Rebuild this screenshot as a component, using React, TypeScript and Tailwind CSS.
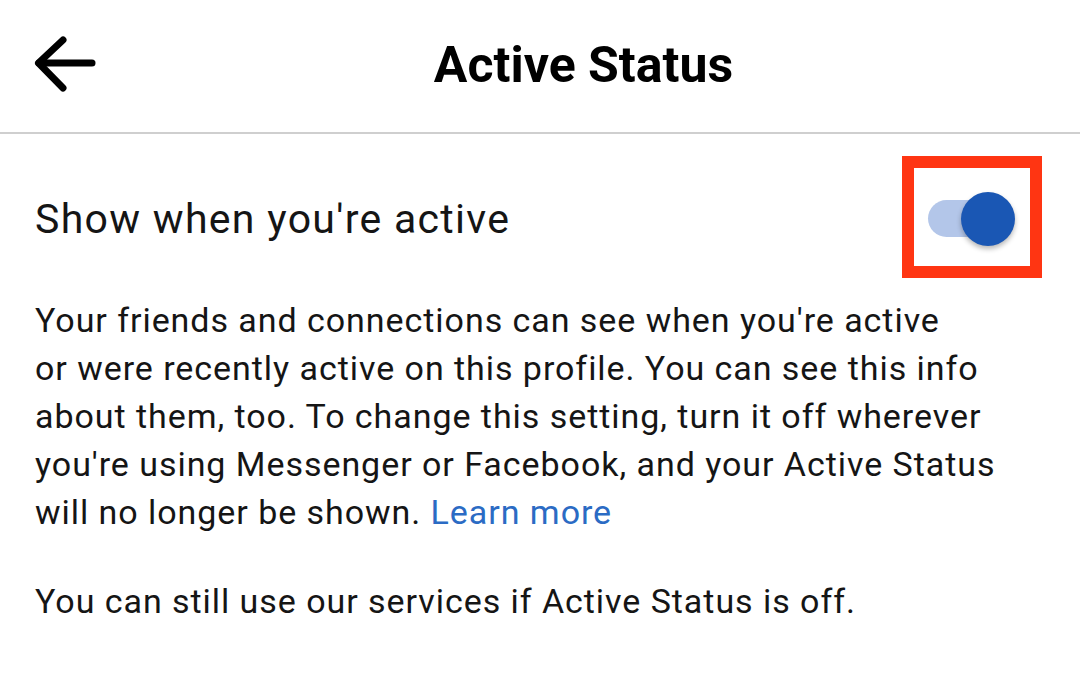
export default function App() {
  return (
    <div className="h-[689px] w-[1080px] overflow-hidden bg-white font-['Roboto',sans-serif] text-[#151515]">
      <header className="relative flex h-[134px] items-start justify-center border-b-2 border-[#cfcfcf] pl-[87px] pt-[40px]">
        <button className="absolute left-[32px] top-[34px] text-black">
          <svg width="66" height="60" viewBox="0 0 66 60" fill="none" stroke="currentColor" strokeWidth="7" strokeLinecap="round" strokeLinejoin="round">
            <path d="M60 29H7" />
            <path d="M31 6 6.5 29 31 54" />
          </svg>
        </button>
        <h1 className="text-[50px] font-bold leading-none text-black">Active Status</h1>
      </header>

      <section className="flex items-center justify-between pl-[35px] pr-[38px] pt-[22px]">
        <span className="pt-[5px] text-[41px] leading-none tracking-[1.3px]">Show when you're active</span>
        <div className="flex h-[122px] w-[140px] items-center border-[12px] border-[#ff3512] pl-[14px] pt-[3px]">
          <div className="relative h-[37px] w-[72px]">
            <div className="h-full w-full rounded-full bg-[#b3c6e9]" />
            <div className="absolute right-[-15px] top-[-8px] h-[54px] w-[54px] rounded-full bg-[#1a57b4] shadow-[0_3px_5px_rgba(0,0,0,0.28)]" />
          </div>
        </div>
      </section>

      <p className="mt-[18px] pl-[35px] text-[34px] leading-[48px] tracking-[0.95px]">
        Your friends and connections can see when you're active
        <br />
        or were recently active on this profile. You can see this info
        <br />
        about them, too. To change this setting, turn it off wherever
        <br />
        you're using Messenger or Facebook, and your Active Status
        <br />
        will no longer be shown. <span className="text-[#2b6bc4]">Learn more</span>
      </p>

      <p className="mt-[41px] pl-[35px] text-[34px] leading-[48px] tracking-[0.95px]">
        You can still use our services if Active Status is off.
      </p>
    </div>
  );
}
